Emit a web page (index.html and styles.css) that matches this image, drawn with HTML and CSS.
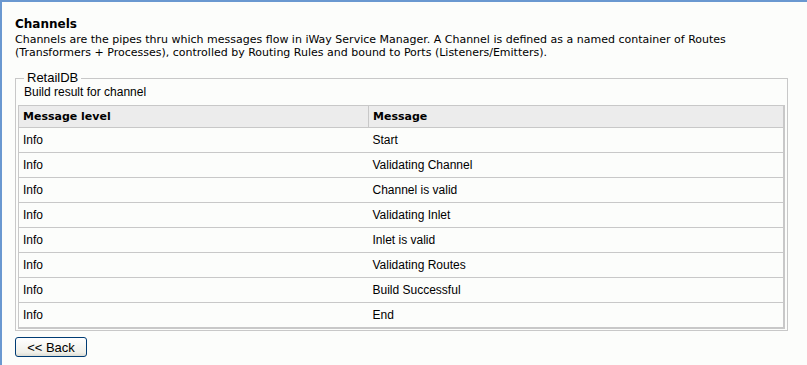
FILE: index.html
```html
<!DOCTYPE html>
<html lang="en">
  <head>
    <meta charset="UTF-8" />
    <title>Channels</title>
    <link rel="stylesheet" href="styles.css">
  </head>
  <body>
    <div class="page">
      <h1 class="title">Channels</h1>
      <p class="desc">
        Channels are the pipes thru which messages flow in iWay Service Manager. A Channel is defined as a named container of Routes
        (Transformers + Processes), controlled by Routing Rules and bound to Ports (Listeners/Emitters).
      </p>

      <fieldset class="result">
        <legend>RetailDB</legend>
        <div class="caption">Build result for channel</div>
        <table class="grid">
          <thead>
            <tr>
              <th class="col-level">Message level</th>
              <th>Message</th>
            </tr>
          </thead>
          <tbody>
            <tr><td>Info</td><td>Start</td></tr>
            <tr><td>Info</td><td>Validating Channel</td></tr>
            <tr><td>Info</td><td>Channel is valid</td></tr>
            <tr><td>Info</td><td>Validating Inlet</td></tr>
            <tr><td>Info</td><td>Inlet is valid</td></tr>
            <tr><td>Info</td><td>Validating Routes</td></tr>
            <tr><td>Info</td><td>Build Successful</td></tr>
            <tr><td>Info</td><td>End</td></tr>
          </tbody>
        </table>
      </fieldset>

      <button class="back-btn">&lt;&lt; Back</button>
    </div>
  </body>
</html>
```
FILE: styles.css
```css
html, body {
  margin: 0;
  padding: 0;
  height: 100%;
}
body {
  background: #fcfdfb;
  border-top: 2px solid #6a98d0;
  border-left: 2px solid #6a98d0;
  box-sizing: border-box;
  font-family: "Liberation Sans", Arial, sans-serif;
  font-size: 12px;
  color: #000;
}
.page {
  padding: 15px 20px 0 13px;
}
.title {
  font-family: "DejaVu Sans", Verdana, sans-serif;
  font-size: 12px;
  font-weight: bold;
  margin: 0;
  line-height: 15px;
}
.desc {
  font-family: "DejaVu Sans", Verdana, sans-serif;
  font-size: 11px;
  line-height: 13px;
  margin: 1px 0 0 0;
}
.result {
  margin: 12px 0 0 0;
  padding: 0 2px 1px 2px;
  border: 1px solid #c8c8c8;
  width: 767px;
  box-sizing: content-box;
}
.result legend {
  font-size: 13px;
  padding: 0 3px;
  margin-left: 6px;
  line-height: 14px;
}
.caption {
  padding-left: 6px;
  line-height: 14px;
  margin-bottom: 6px;
}
.grid {
  width: 767px;
  border-collapse: collapse;
  border: 1px solid #c8c8c8;
  border-bottom: 2px solid #c8c8c8;
  border-right: 2px solid #c8c8c8;
}
.grid th, .grid td {
  text-align: left;
  height: 24px;
  padding: 0 4px;
  border-bottom: 1px solid #c8c8c8;
}
.grid th {
  background: #ececec;
  font-family: "DejaVu Sans", Verdana, sans-serif;
  font-size: 11px;
  font-weight: bold;
  height: 21px;
  border-left: 1px solid #c8c8c8;
}
.grid td {
  font-size: 12px;
}
.grid .col-level {
  width: 341px;
}
.back-btn {
  margin-top: 6px;
  width: 72px;
  height: 20px;
  font-family: "Liberation Sans", Arial, sans-serif;
  font-size: 13px;
  color: #000;
  background: linear-gradient(#ffffff, #f0f0ea 80%, #dcdcd4);
  border: 1px solid #003c74;
  border-radius: 3px;
  padding: 0;
}
```
